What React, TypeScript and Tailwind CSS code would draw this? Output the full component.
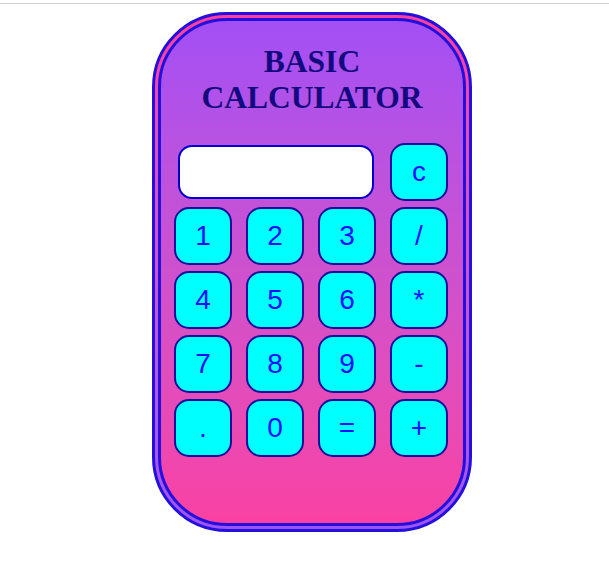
import React from "react";

const rows: string[][] = [
  ["1", "2", "3", "/"],
  ["4", "5", "6", "*"],
  ["7", "8", "9", "-"],
  [".", "0", "=", "+"],
];

function Key({ label }: { label: string }) {
  return (
    <button className="w-[58px] h-[58px] rounded-[15px] border-2 border-[#1c0c9c] bg-[#00ffff] text-[#1010ff] text-[28px] leading-none flex items-center justify-center [font-family:'Liberation_Sans',Arial,sans-serif]">
      {label}
    </button>
  );
}

export default function App() {
  return (
    <div className="w-[609px] h-[574px] bg-white">
      <div className="h-[3px]" />
      <div className="h-px bg-[#d0d0d0]" />
      <div className="pt-[8px] pl-[152px]">
        <div className="w-[320px] h-[520px] rounded-[75px] border-[3px] border-[#2410dc] p-[3px] bg-gradient-to-b from-[#ff3ea0] to-[#9d54f6]">
          <div className="w-full h-full rounded-[69px] border-[3px] border-[#2410dc] bg-gradient-to-b from-[#a34ff5] to-[#fa41a3] pt-[23px] pl-[13px]">
            <h1 className="text-center text-[31.5px] leading-[36px] font-bold text-[#140a80] [font-family:'Liberation_Serif','Times_New_Roman',serif] pr-[13px]">
              BASIC
              <br />
              CALCULATOR
            </h1>
            <div className="mt-[27px] flex flex-col gap-[6px]">
              <div className="flex gap-[14px] items-center">
                <div className="w-[202px] flex">
                  <div className="ml-[4px] w-[196px] h-[54px] bg-white border-2 border-[#0000cd] rounded-[14px]" />
                </div>
                <Key label="c" />
              </div>
              {rows.map((r, i) => (
                <div key={i} className="flex gap-[14px]">
                  {r.map((k) => (
                    <Key key={k} label={k} />
                  ))}
                </div>
              ))}
            </div>
          </div>
        </div>
      </div>
    </div>
  );
}
